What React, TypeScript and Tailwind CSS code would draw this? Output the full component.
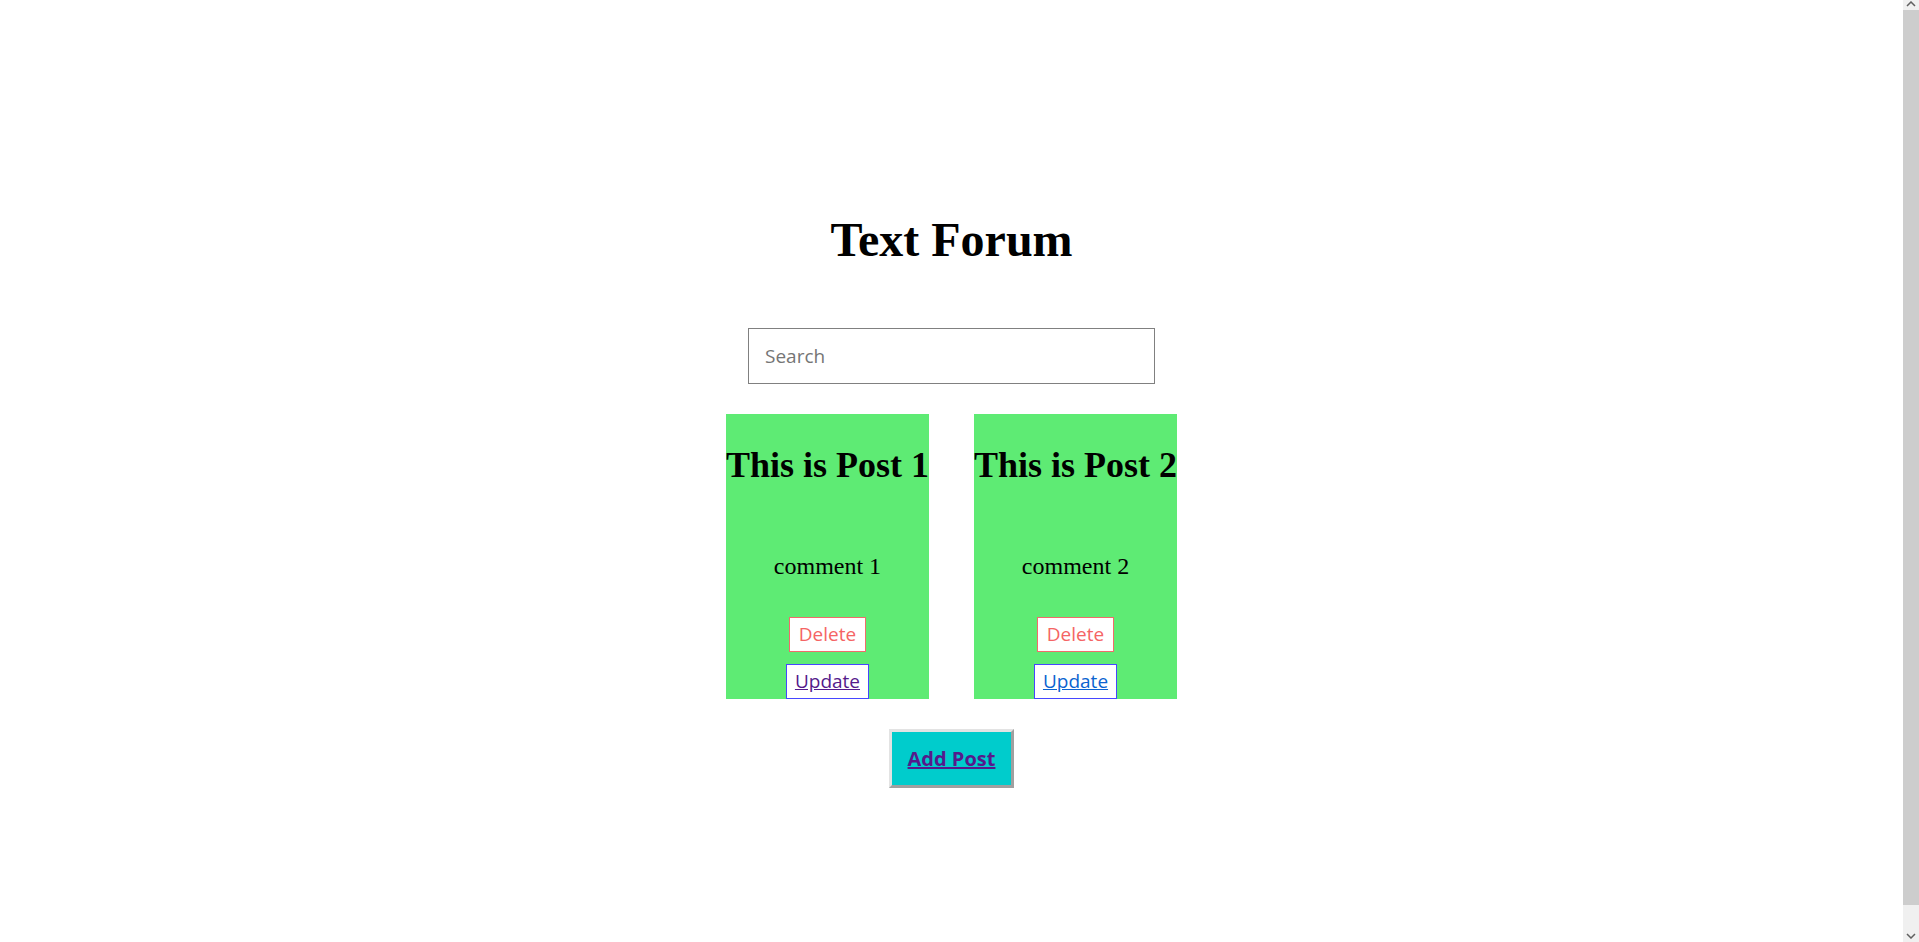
const posts = [
  { title: 'This is Post 1', comment: 'comment 1', visited: true },
  { title: 'This is Post 2', comment: 'comment 2', visited: false },
];

function PostCard({ title, comment, visited }: { title: string; comment: string; visited: boolean }) {
  return (
    <div className="flex w-fit flex-col items-center bg-[#5eeb74] text-center">
      <h2 className="whitespace-nowrap pt-[31px] text-[36px] leading-[40px] font-bold text-black [font-family:'Liberation_Serif',serif]">
        {title}
      </h2>
      <p className="mt-[68px] text-[24px] leading-[26px] text-black [font-family:'Liberation_Serif',serif]">
        {comment}
      </p>
      <button className="mt-[38px] h-[35px] w-[77px] border border-[#f26b6b] bg-white text-[19px] text-[#f56464] [font-family:'Open_Sans',sans-serif]">
        Delete
      </button>
      <a
        href="#"
        className={`mt-[12px] flex h-[35px] w-[83px] items-center justify-center border border-[#4646ff] bg-white text-[19px] underline [font-family:'Open_Sans',sans-serif] ${
          visited ? 'text-[#551a8b]' : 'text-[#0b63d0]'
        }`}
      >
        Update
      </a>
    </div>
  );
}

// fake browser scrollbar seen at the right edge of the screenshot
function Scrollbar() {
  return (
    <div className="flex h-screen w-4 shrink-0 flex-col bg-[#f0f0f0]">
      <div className="flex h-[10px] items-start justify-center">
        <svg width="10" height="6" viewBox="0 0 10 6" className="mt-[1px]">
          <path d="M1 5 L5 1 L9 5" fill="none" stroke="#606060" strokeWidth="1.5" />
        </svg>
      </div>
      <div className="flex-1 bg-[#cdcdcd]" />
      <div className="flex h-[37px] items-end justify-center pb-[3px]">
        <svg width="10" height="6" viewBox="0 0 10 6">
          <path d="M1 1 L5 5 L9 1" fill="none" stroke="#606060" strokeWidth="1.5" />
        </svg>
      </div>
    </div>
  );
}

export default function App() {
  return (
    <div className="flex h-screen overflow-hidden bg-white">
      <div className="flex flex-1 flex-col items-center pt-[213px]">
        <h1 className="text-[48px] leading-[53px] font-bold text-black [font-family:'Liberation_Serif',serif]">
          Text Forum
        </h1>
        <input
          type="text"
          placeholder="Search"
          className="mt-[62px] h-[56px] w-[407px] border border-[#808080] px-4 text-[19px] outline-none placeholder:text-[#757575] [font-family:'Open_Sans',sans-serif]"
        />
        <div className="mt-[30px] flex gap-[45px]">
          {posts.map((p) => (
            <PostCard key={p.title} {...p} />
          ))}
        </div>
        <a
          href="#"
          className="mt-[30px] flex h-[59px] w-[125px] items-center justify-center border-[3px] border-t-[#e3e3e3] border-l-[#e3e3e3] border-r-[#a0a0a0] border-b-[#a0a0a0] bg-[#00cccc] text-[20px] font-bold text-[#551a8b] underline [font-family:'Open_Sans',sans-serif]"
        >
          Add Post
        </a>
      </div>
      <Scrollbar />
    </div>
  );
}
